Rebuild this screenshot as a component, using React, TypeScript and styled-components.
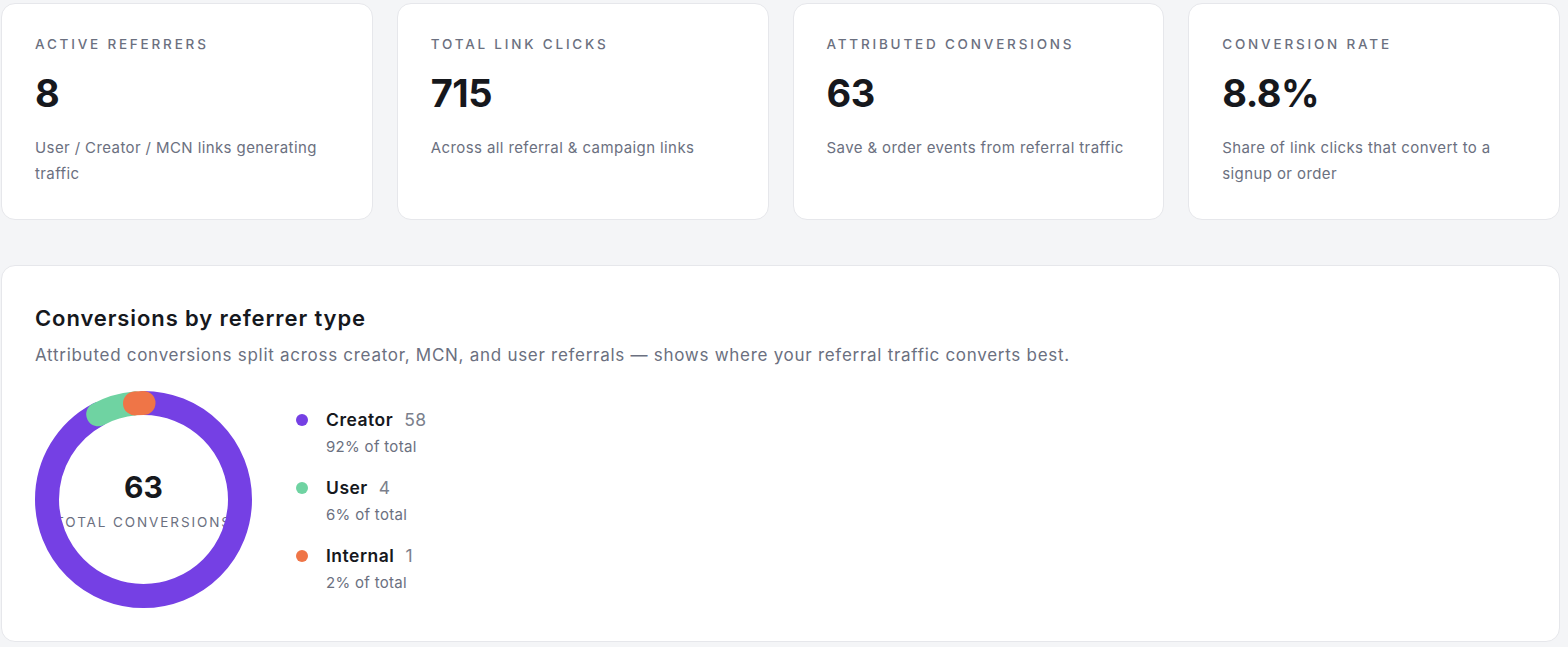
import React from 'react';
import styled, {createGlobalStyle} from 'styled-components';

const GlobalStyle = createGlobalStyle`
  html, body {
    margin: 0;
    padding: 0;
    background: #f4f5f7;
  }
  body {
    font-family: Inter, "Noto Sans", "Liberation Sans", sans-serif;
    color: #16181d;
    -webkit-font-smoothing: antialiased;
  }
`;

const Page = styled.div`
  display: flex;
  flex-direction: column;
  gap: 45px;
  padding: 3px 8px 0 1px;
`;

const StatGrid = styled.div`
  display: grid;
  grid-template-columns: repeat(4, 1fr);
  gap: 24px;
`;

const Card = styled.div`
  background: #fff;
  border: 1px solid #e6e7eb;
  border-radius: 14px;
`;

const StatCard = styled(Card)`
  padding: 31px 33px 32px;
  display: flex;
  flex-direction: column;
`;

const StatLabel = styled.div`
  font-size: 13.5px;
  line-height: 18px;
  letter-spacing: 2.8px;
  font-weight: 500;
  color: #6b7080;
  text-transform: uppercase;
`;

const StatValue = styled.div`
  margin-top: 16px;
  font-size: 38px;
  line-height: 48px;
  font-weight: 700;
  letter-spacing: -0.5px;
  color: #16181d;
`;

const StatHint = styled.div`
  margin-top: 18px;
  font-size: 15px;
  line-height: 26px;
  letter-spacing: 0.4px;
  color: #6b7080;
`;

const Panel = styled(Card)`
  padding: 36px 33px 33px;
`;

const PanelTitle = styled.h2`
  margin: 0;
  font-size: 22px;
  line-height: 32px;
  font-weight: 600;
  letter-spacing: 0.9px;
  color: #16181d;
`;

const PanelSub = styled.p`
  margin: 9px 0 0;
  font-size: 17px;
  line-height: 24px;
  letter-spacing: 0.72px;
  color: #6b7080;
`;

const ChartRow = styled.div`
  margin-top: 24px;
  display: flex;
  align-items: center;
  gap: 44px;
`;

const DonutWrap = styled.div`
  position: relative;
  width: 217px;
  height: 217px;
  flex: none;

  svg {
    position: relative;
    z-index: 1;
    display: block;
  }
`;

const DonutCenter = styled.div`
  position: absolute;
  inset: 0;
  display: flex;
  flex-direction: column;
  align-items: center;
  justify-content: center;
  z-index: 0;
`;

const CenterValue = styled.div`
  font-size: 30px;
  line-height: 36px;
  font-weight: 700;
  color: #16181d;
`;

const CenterLabel = styled.div`
  margin-top: 8px;
  font-size: 13.5px;
  line-height: 18px;
  letter-spacing: 1.9px;
  color: #6b7080;
  white-space: nowrap;
`;

const Legend = styled.ul`
  list-style: none;
  margin: 2px 0 0;
  padding: 0;
  display: flex;
  flex-direction: column;
  gap: 16px;
`;

const LegendItem = styled.li`
  display: grid;
  grid-template-columns: 12px auto;
  column-gap: 18px;
  align-items: center;
`;

const Dot = styled.span<{ $color: string }>`
  width: 12px;
  height: 12px;
  border-radius: 50%;
  background: ${p => p.$color};
`;

const LegendName = styled.div`
  font-size: 17.5px;
  line-height: 26px;
  font-weight: 600;
  letter-spacing: 0.5px;
  color: #16181d;

  span {
    margin-left: 11px;
    font-weight: 400;
    color: #7b7f8c;
  }
`;

const LegendPct = styled.div`
  grid-column: 2;
  margin-top: 2px;
  font-size: 15px;
  line-height: 24px;
  letter-spacing: 0.3px;
  color: #6b7080;
`;

const stats = [
  {label: 'Active referrers', value: '8', hint: 'User / Creator / MCN links generating traffic'},
  {label: 'Total link clicks', value: '715', hint: 'Across all referral & campaign links'},
  {label: 'Attributed conversions', value: '63', hint: 'Save & order events from referral traffic'},
  {label: 'Conversion rate', value: '8.8%', hint: 'Share of link clicks that convert to a signup or order'},
];

const segments = [
  {name: 'Creator', count: 58, pct: 92, color: '#7540e4'},
  {name: 'User', count: 4, pct: 6, color: '#6fd3a2'},
  {name: 'Internal', count: 1, pct: 2, color: '#ef7547'},
];

function Donut() {
  const size = 217;
  const stroke = 24;
  const r = (size - stroke) / 2;
  const c = 2 * Math.PI * r;
  const total = segments.reduce((s, x) => s + x.count, 0);
  let offset = 0;
  return (
    <DonutWrap>
      <DonutCenter>
        <CenterValue>{total}</CenterValue>
        <CenterLabel>TOTAL CONVERSIONS</CenterLabel>
      </DonutCenter>
      <svg width={size} height={size} viewBox={`0 0 ${size} ${size}`}>
        <g transform={`rotate(-90 ${size / 2} ${size / 2})`}>
          {segments.map(seg => {
            const len = (seg.count / total) * c;
            const el = (
              <circle
                key={seg.name}
                cx={size / 2}
                cy={size / 2}
                r={r}
                fill="none"
                stroke={seg.color}
                strokeWidth={stroke}
                strokeLinecap="round"
                strokeDasharray={`${len} ${c - len}`}
                strokeDashoffset={-offset}
              />
            );
            offset += len;
            return el;
          })}
        </g>
      </svg>
    </DonutWrap>
  );
}

export default function App() {
  return (
    <>
      <GlobalStyle />
      <Page>
        <StatGrid>
          {stats.map(s => (
            <StatCard key={s.label}>
              <StatLabel>{s.label}</StatLabel>
              <StatValue>{s.value}</StatValue>
              <StatHint>{s.hint}</StatHint>
            </StatCard>
          ))}
        </StatGrid>
        <Panel>
          <PanelTitle>Conversions by referrer type</PanelTitle>
          <PanelSub>
            Attributed conversions split across creator, MCN, and user referrals — shows where your referral traffic converts best.
          </PanelSub>
          <ChartRow>
            <Donut />
            <Legend>
              {segments.map(seg => (
                <LegendItem key={seg.name}>
                  <Dot $color={seg.color} />
                  <LegendName>
                    {seg.name}<span>{seg.count}</span>
                  </LegendName>
                  <LegendPct>{seg.pct}% of total</LegendPct>
                </LegendItem>
              ))}
            </Legend>
          </ChartRow>
        </Panel>
      </Page>
    </>
  );
}
